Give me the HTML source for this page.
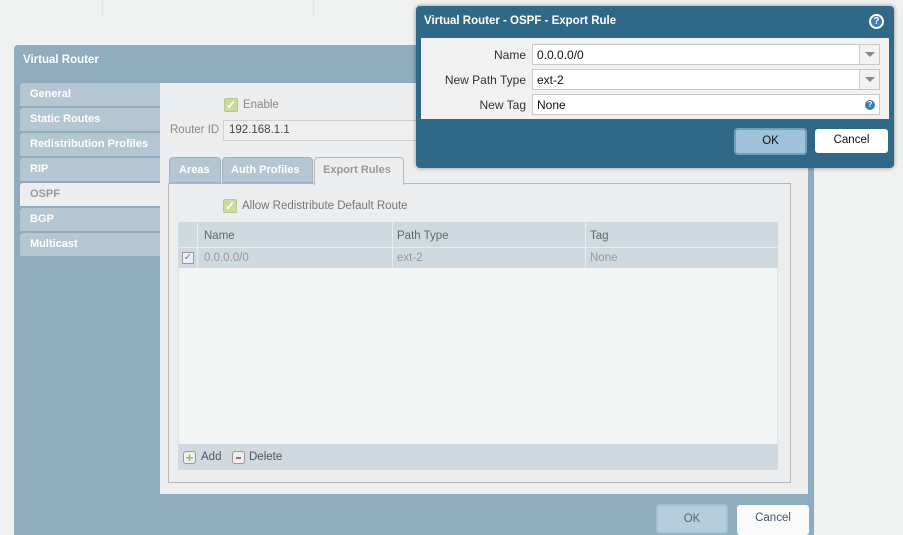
<!DOCTYPE html>
<html><head><style>
*{box-sizing:border-box;margin:0;padding:0}
body{width:903px;height:527px;background:#eff0f0;position:relative;overflow:hidden;font-family:"Liberation Sans",sans-serif;font-size:11.5px;color:#333}
.a{position:absolute}
.vl{position:absolute;top:0;width:1px;height:16px;background:#e2e3e3}
.tab{position:absolute;left:20px;width:140px;height:24px;background:#b4c6d1;border-radius:3px 0 0 0;color:#fff;font-weight:bold;font-size:11px;padding:5px 0 0 10px;border-bottom:1px solid #8eacbd}
.cb{position:absolute;width:14px;height:14px;background:#c9dc9c;border:1px solid #b5c78a;border-radius:2px;color:#fff;font-size:12px;line-height:12px;text-align:center;font-weight:bold}
.fld{position:absolute;left:532px;width:348px;height:21px;background:#fff;border:1px solid #c8c8c8;padding:3px 4px;font-size:12px;color:#111}
.dd{position:absolute;right:0;top:0;width:20px;height:19px;border-left:1px solid #ccc;background:#f2f2f2}
.dd:after{content:"";position:absolute;left:5px;top:7px;border-left:5px solid transparent;border-right:5px solid transparent;border-top:5px solid #888}
.lbl{position:absolute;width:106px;text-align:right;left:420px;color:#333;font-size:12px}
</style></head><body>
<div class="vl" style="left:102px"></div><div class="vl" style="left:313px"></div>
<div class="a" style="left:14px;top:45px;width:800px;height:490px;background:#8eacbd;border-radius:4px 4px 0 0"></div>
<div class="a" style="left:23px;top:54px;color:#fff;font-weight:bold;font-size:11.5px">Virtual Router</div>
<div class="tab" style="top:83px">General</div>
<div class="tab" style="top:108px">Static Routes</div>
<div class="tab" style="top:133px">Redistribution Profiles</div>
<div class="tab" style="top:158px">RIP</div>
<div class="tab" style="top:183px;background:#eceded;color:#999">OSPF</div>
<div class="tab" style="top:208px">BGP</div>
<div class="tab" style="top:233px">Multicast</div>
<div class="a" style="left:160px;top:83px;width:648px;height:411px;background:#ecedee"></div>
<div class="cb" style="left:224px;top:98px">✓</div>
<div class="a" style="left:243px;top:99px;color:#888">Enable</div>
<div class="a" style="left:170px;top:124px;color:#888">Router ID</div>
<div class="a" style="left:223px;top:120px;width:200px;height:21px;background:#eef0f0;border:1px solid #d0d0d0;padding:3px 5px;color:#444">192.168.1.1</div>
<div class="a" style="left:169px;top:157px;width:52px;height:26px;background:#b4c6d1;border:1px solid #9fb2be;border-radius:4px 4px 0 0;color:#fff;font-weight:bold;font-size:11px;padding:6px 0 0 9px">Areas</div>
<div class="a" style="left:222px;top:157px;width:91px;height:26px;background:#b4c6d1;border:1px solid #9fb2be;border-radius:4px 4px 0 0;color:#fff;font-weight:bold;font-size:11px;padding:6px 0 0 8px">Auth Profiles</div>
<div class="a" style="left:168px;top:183px;width:623px;height:300px;border:1px solid #b8b8b8;background:#ecedee"></div>
<div class="a" style="left:314px;top:157px;width:90px;height:28px;background:#ecedee;border:1px solid #b8b8b8;border-bottom:none;border-radius:4px 4px 0 0;color:#999;font-weight:bold;font-size:11px;padding:6px 0 0 8px">Export Rules</div>
<div class="cb" style="left:223px;top:199px">✓</div>
<div class="a" style="left:242px;top:200px;color:#777">Allow Redistribute Default Route</div>
<div class="a" style="left:178px;top:222px;width:600px;height:248px;background:#f3f4f4;border:1px solid #dde2e5"></div>
<div class="a" style="left:178px;top:222px;width:600px;height:26px;background:#cfdae0;border-bottom:1px solid #e6eaec"></div>
<div class="a" style="left:178px;top:248px;width:600px;height:20px;background:#cfdae0"></div>
<div class="a" style="left:197px;top:222px;width:1px;height:46px;background:#e6ecef"></div>
<div class="a" style="left:392px;top:222px;width:1px;height:46px;background:#e6ecef"></div>
<div class="a" style="left:585px;top:222px;width:1px;height:46px;background:#e6ecef"></div>
<div class="a" style="left:204px;top:230px;color:#666">Name</div>
<div class="a" style="left:397px;top:230px;color:#666">Path Type</div>
<div class="a" style="left:590px;top:230px;color:#666">Tag</div>
<div class="a" style="left:182px;top:252px;width:12px;height:12px;border:1px solid #999;background:#eef;color:#779;font-size:10px;line-height:10px;text-align:center">✓</div>
<div class="a" style="left:204px;top:252px;color:#999">0.0.0.0/0</div>
<div class="a" style="left:397px;top:252px;color:#999">ext-2</div>
<div class="a" style="left:590px;top:252px;color:#999">None</div>
<div class="a" style="left:178px;top:444px;width:600px;height:26px;background:#cfd9df"></div>
<div class="a" style="left:183px;top:451px;width:13px;height:13px;border:1px solid #999;border-radius:3px;background:#eee;color:#9b5;font-weight:bold;font-size:13px;line-height:11px;text-align:center">+</div>
<div class="a" style="left:201px;top:451px;color:#555">Add</div>
<div class="a" style="left:232px;top:451px;width:13px;height:13px;border:1px solid #999;border-radius:3px;background:#eee"><div class="a" style="left:3px;top:5px;width:5px;height:2px;background:#a66"></div></div>
<div class="a" style="left:249px;top:451px;color:#555">Delete</div>
<div class="a" style="left:656px;top:504px;width:72px;height:30px;background:#b3cddc;border:2px solid #9fc0d2;border-radius:4px;text-align:center;padding-top:7px;color:#567">OK</div>
<div class="a" style="left:737px;top:505px;width:72px;height:30px;background:#fafafa;border-radius:3px;text-align:center;padding-top:7px;color:#456">Cancel</div>

<div class="a" style="left:416px;top:6px;width:478px;height:162px;background:#306987;border-radius:4px;box-shadow:0 0 4px rgba(0,0,0,.4)"></div>
<div class="a" style="left:424px;top:15px;color:#fff;font-weight:bold;font-size:11.5px">Virtual Router - OSPF - Export Rule</div>
<div class="a" style="left:869px;top:14px;width:15px;height:15px;border-radius:50%;background:#3b7fb0;border:2px solid #fff;color:#fff;font-size:10px;font-weight:bold;text-align:center;line-height:11px">?</div>
<div class="a" style="left:421px;top:38px;width:468px;height:81px;background:#f1f1f1"></div>
<div class="lbl" style="top:48px">Name</div>
<div class="lbl" style="top:73px">New Path Type</div>
<div class="lbl" style="top:98px">New Tag</div>
<div class="fld" style="top:44px">0.0.0.0/0<div class="dd"></div></div>
<div class="fld" style="top:69px">ext-2<div class="dd"></div></div>
<div class="fld" style="top:94px">None<div class="a" style="right:4px;top:5px;width:10px;height:10px;border-radius:50%;background:#3a7bb0;color:#fff;font-size:8px;line-height:10px;text-align:center;font-weight:bold">?</div></div>
<div class="a" style="left:734px;top:128px;width:73px;height:27px;background:#9ec3d8;border:2px solid #6fa1bd;border-radius:4px;text-align:center;padding-top:5px;color:#111">OK</div>
<div class="a" style="left:815px;top:129px;width:73px;height:24px;background:#fff;border-radius:3px;text-align:center;padding-top:5px;color:#111">Cancel</div>
</body></html>
